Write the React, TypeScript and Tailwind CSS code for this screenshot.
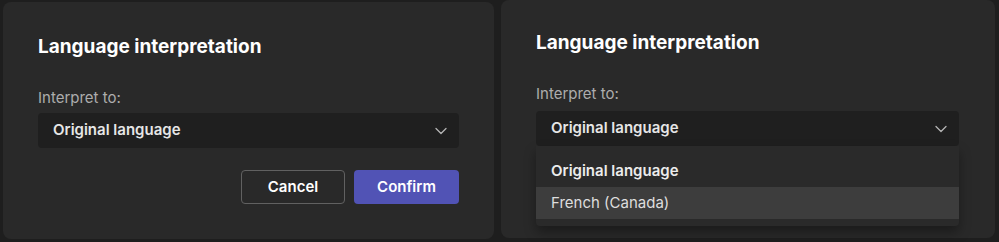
import React from "react";

function Chevron() {
  return (
    <svg width="14" height="14" viewBox="0 0 14 14" fill="none">
      <path d="M2 4.5 L7 9.5 L12 4.5" stroke="#b5b5b5" strokeWidth="1.3" strokeLinecap="round" strokeLinejoin="round" />
    </svg>
  );
}

function Select() {
  return (
    <div className="flex h-[35px] items-center justify-between rounded-[4px] bg-[#1f1f1f] pl-[15px] pr-[11px]">
      <span className="text-[15px] font-semibold text-[#e6e6e6]">Original language</span>
      <Chevron />
    </div>
  );
}

export default function App() {
  return (
    <div
      className="flex h-[242px] w-[999px] gap-[7px] bg-[#1e1e1e] pl-[3px]"
      style={{ fontFamily: "Inter, 'Open Sans', sans-serif" }}
    >
      <div className="mt-[2px] flex h-[237px] w-[491px] flex-col rounded-[8px] bg-[#292929] px-[35px] pt-[32px]">
        <div className="text-[19px] font-bold leading-[26px] text-white">Language interpretation</div>
        <div className="mt-[28px] text-[15px] leading-[20px] text-[#adadad]">Interpret to:</div>
        <div className="mt-[5px]">
          <Select />
        </div>
        <div className="mt-[22px] flex justify-end gap-[9px]">
          <button className="h-[34px] w-[104px] rounded-[4px] border border-[#616161] text-[15px] font-semibold text-white">
            Cancel
          </button>
          <button className="h-[34px] w-[105px] rounded-[4px] bg-[#5153b5] text-[15px] font-semibold text-white">
            Confirm
          </button>
        </div>
      </div>
      <div className="flex h-[238px] w-[494px] flex-col rounded-[8px] bg-[#292929] pl-[35px] pr-[36px] pt-[30px]">
        <div className="text-[19px] font-bold leading-[26px] text-white">Language interpretation</div>
        <div className="mt-[28px] text-[15px] leading-[20px] text-[#adadad]">Interpret to:</div>
        <div className="relative mt-[7px]">
          <Select />
          <div className="absolute left-0 right-0 top-[35px] rounded-b-[4px] bg-[#2a2a2a] pb-[7px] pt-[9px] shadow-[0_6px_12px_rgba(0,0,0,0.35)]">
            <div className="flex h-[32px] items-center pl-[15px] text-[15px] font-semibold text-[#ececec]">Original language</div>
            <div className="flex h-[32px] items-center bg-[#3d3d3d] pl-[15px] text-[15px] text-[#dedede]">French (Canada)</div>
          </div>
        </div>
      </div>
    </div>
  );
}
